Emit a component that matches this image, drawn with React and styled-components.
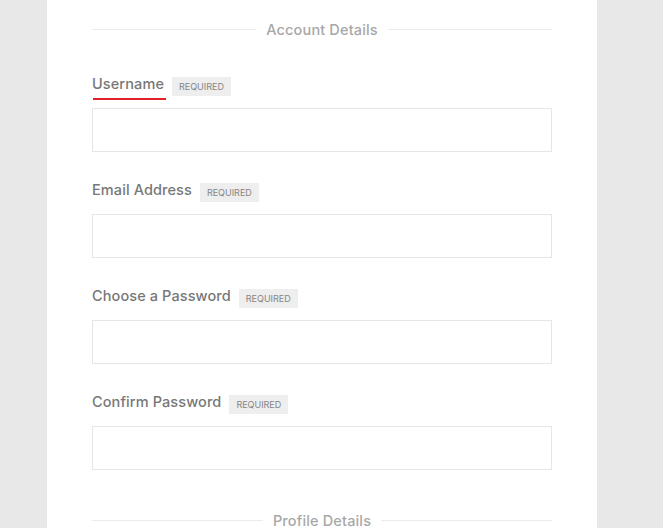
import React from 'react'
import styled, { createGlobalStyle } from 'styled-components'

const Global = createGlobalStyle`
  body {
    margin: 0;
    background: #e8e8e8;
    font-family: Inter, "Open Sans", "Liberation Sans", sans-serif;
  }
`

const fields = [
  { label: 'Username', active: true },
  { label: 'Email Address' },
  { label: 'Choose a Password', type: 'password' },
  { label: 'Confirm Password', type: 'password' },
]

const App = () => {
  return (
    <>
      <Global />
      <S_Page>
        <Card>
          <Divider><span>Account Details</span></Divider>
          <Fields>
            {fields.map((f) => (
              <Field key={f.label}>
                <LabelRow>
                  <Label $active={f.active}>{f.label}</Label>
                  <Badge>Required</Badge>
                </LabelRow>
                <Input type={f.type || 'text'} />
              </Field>
            ))}
          </Fields>
          <Divider $top={40}><span>Profile Details</span></Divider>
        </Card>
      </S_Page>
    </>
  )
}

const S_Page = styled.div`
  height: 528px;
  overflow: hidden;
  padding-left: 47px;
`

const Card = styled.div`
  width: 460px;
  min-height: 528px;
  background: #fff;
  padding: 19px 45px 0;
`

const Divider = styled.div`
  display: flex;
  align-items: center;
  gap: 10px;
  height: 20px;
  margin-top: ${(p) => (p.$top ? p.$top + 'px' : '0')};

  &::before,
  &::after {
    content: '';
    flex: 1;
    height: 1px;
    background: #ebebeb;
  }

  span {
    font-size: 14.5px;
    font-weight: 500;
    color: #a8a8a8;
    letter-spacing: 0.15px;
  }
`

const Fields = styled.div`
  display: flex;
  flex-direction: column;
  gap: 30px;
  margin-top: 37px;
`

const Field = styled.div`
  display: flex;
  flex-direction: column;
`

const LabelRow = styled.div`
  display: flex;
  align-items: center;
  height: 20px;
  margin-bottom: 12px;
`

const Label = styled.label`
  position: relative;
  padding-bottom: 4px;
  font-size: 14.5px;
  font-weight: 500;
  color: #777;
  line-height: 20px;
  letter-spacing: 0.1px;

  ${(p) =>
    p.$active &&
    `
    &::after {
      content: '';
      position: absolute;
      left: 1px;
      right: -2px;
      top: 24px;
      height: 2px;
      background: #e3202a;
    }
  `}
`

const Badge = styled.span`
  margin-left: 8px;
  height: 19px;
  line-height: 19px;
  padding: 0 7px;
  background: #eeeeee;
  color: #858585;
  font-size: 9px;
  text-transform: uppercase;
`

const Input = styled.input`
  box-sizing: border-box;
  width: 100%;
  height: 44px;
  margin: 0;
  border: 1px solid #e6e6e6;
  background: #fff;
  outline: none;
  padding: 0 12px;
  font-family: inherit;
`

export default App
